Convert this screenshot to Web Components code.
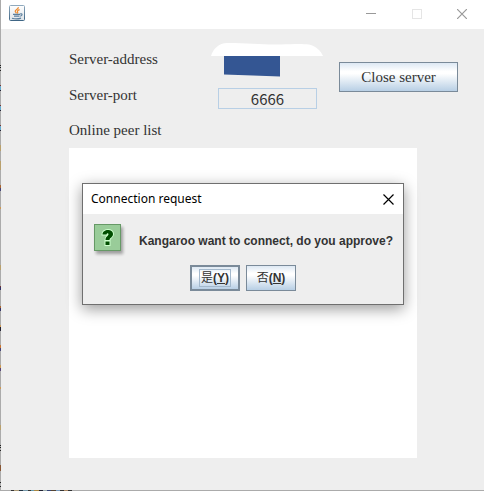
<!DOCTYPE html>
<html lang="en">
<head>
<meta charset="utf-8">
<title>Server</title>
<style>
html,body{height:100%}
body{margin:0;background:#ababab;overflow:hidden}
</style>
</head>
<body>
<server-app></server-app>
<script>
function define(name, html){
  customElements.define(name, class extends HTMLElement{
    constructor(){
      super();
      const t=document.createElement('template');
      t.innerHTML=html;
      this.attachShadow({mode:'open'}).append(t.content.cloneNode(true));
    }
  });
}

define('java-icon', `
<style>:host{display:block;width:16px;height:16px}svg{display:block}</style>
<svg width="16" height="16" viewBox="0 0 16 16" aria-hidden="true">
<defs><linearGradient id="g" x1="0" y1="0" x2="0" y2="1"><stop offset="0" stop-color="#8fa9bd"/><stop offset="1" stop-color="#3f6685"/></linearGradient>
<linearGradient id="h" x1="0" y1="0" x2="0" y2="1"><stop offset="0" stop-color="#fff"/><stop offset="1" stop-color="#dde3e8"/></linearGradient></defs>
<rect x=".5" y=".5" width="15" height="15" rx="1" fill="url(#h)" stroke="url(#g)"/>
<path d="M9.3 2.2C9.8 4 6 4.7 6.2 6.3c.1.8 1 1.3 1.2 2M10.6 4.6C8.8 5.2 8 6 8.6 6.8c.4.7.2 1.2-.4 1.7" fill="none" stroke="#ee8a2c" stroke-width="1.2"/>
<path d="M4 9.3h7M5 11.2h5.5M3 13.2c2.5.8 6.500.8 9-.1M11 9c2.600-1 2.800 1.400.2 2.200" fill="none" stroke="#5b7f9d" stroke-width="1.200"/>
</svg>`);

define('window-button', `
<style>
:host{display:block}
button{display:grid;place-items:center;width:100%;height:100%;margin:0;padding:0;border:0;background:none;color:inherit}
</style><button type="button"><slot></slot></button>`);

define('metal-button', `
<style>
:host{display:block}
button{display:flex;align-items:center;justify-content:center;width:100%;height:100%;margin:0;padding:0;
border:1px solid #7a8a99;color:#333;font:inherit;
background:linear-gradient(#dde8f3 0,#fff 30%,#fff 38%,#b8cfe5 100%)}
:host([default]) button{border-width:2px}
span{border:1px solid transparent;padding:0 1px;line-height:16px}
:host([default]) span{border-color:#a3b8cc}
</style><button type="button"><span><slot></slot></span></button>`);

define('title-bar', `
<style>
:host{display:flex;align-items:flex-start;height:29px;background:#fff;color:#999}
java-icon{margin:5px 0 0 8px}
.space{flex:1}
window-button{width:45px;height:27px}
svg{display:block}
</style>
<java-icon></java-icon><div class="space"></div>
<window-button><svg width="11" height="11" role="img" aria-label="Minimize"><path d="M0 5.500h10" stroke="currentColor"/></svg></window-button>
<window-button><svg width="10" height="10" role="img" aria-label="Maximize"><rect x=".5" y=".5" width="9" height="9" fill="none" stroke="#e5e5e5"/></svg></window-button>
<window-button><svg width="10" height="10" role="img" aria-label="Close"><path d="M0 0l10 10M10 0L0 10" stroke="currentColor" stroke-width="1.200"/></svg></window-button>`);

define('address-cover', `
<style>:host{display:block}svg{display:block}</style>
<svg width="112" height="34" viewBox="0 0 112 34" role="img" aria-label="Hidden address">
<path d="M0 13C2 6 8 0 16 0C38 0 52 2 70 1.500C82 1 91 .5 98 1.500C105 3 110 8 112 13Z" fill="#fff"/>
<path d="M13 13H69V33.500L42 32.500L13 31.500Z" fill="#345693"/>
</svg>`);

define('server-form', `
<style>
:host{display:grid;grid-template-columns:142px 1fr 16px 119px;grid-template-rows:37px 36px;align-items:center;
padding:11px 26px 0 68px;font:15px/20px "Liberation Serif",serif;color:#333}
input{box-sizing:border-box;width:calc(100% - 13px);height:21px;margin:7px 6px 0 7px;padding:0;border:1px solid #b8cfe5;
background:#eee;color:#333;text-align:center;font:15px/19px "Noto Sans CJK SC","Noto Sans",sans-serif}
address-cover{align-self:end}
label{grid-area:2/1}
input{grid-area:2/2}
metal-button{grid-area:1/4/3/5;height:30px}
</style>
<div>Server-address</div><address-cover></address-cover>
<label for="port">Server-port</label><input id="port" value="6666" readonly>
<metal-button>Close server</metal-button>`);

define('peer-list', `
<style>
:host{display:flex;flex-direction:column;padding:0 67px 32px 68px;font:15px/35px "Liberation Serif",serif;color:#333}
ul{flex:1;margin:0;padding:0;background:#fff;list-style:none}
</style>
<div id="t">Online peer list</div><ul aria-labelledby="t"></ul>`);

define('question-icon', `
<style>:host{display:block;width:28px;height:28px}
div{box-sizing:border-box;width:27px;height:27px;border:1px solid #669966;background:#9c9;box-shadow:2px 3px 3px #0005}svg{display:block}</style>
<div><svg width="25" height="25" viewBox="0 0 25 25" role="img" aria-label="Question">
<path d="M7.500 9.500C7.500 3.500 18 3.500 18 9C18 12.500 14.500 12.500 14.500 15H10.500C10.500 11.500 13.500 11 13.500 9.300C13.500 8 11.800 8 11.500 9.500ZM10.500 16.500H14.500V20H10.500Z" fill="#004d00" stroke="#ccffcc" stroke-width="2" paint-order="stroke"/></svg></div>`);

define('request-dialog', `
<style>
:host{display:block;box-sizing:border-box;border:1px solid #6f6f6f;background:#eee;color:#333;
box-shadow:0 4px 14px #0006;font:bold 12px/16px "Liberation Sans","Noto Sans CJK SC",sans-serif}
header{display:flex;align-items:center;height:30px;padding-left:8px;background:#fff;color:#000;font:12px/16px "Noto Sans","Noto Sans CJK SC",sans-serif}
header span{flex:1}
window-button{width:30px;height:30px}
svg{display:block}
.message{display:flex;align-items:center;gap:18px;padding:10px 10px 0 11px;white-space:nowrap}
.message p{margin:5px 0 0}
.actions{display:flex;justify-content:center;gap:6px;padding:13px 0 13px}
.actions span{font-weight:normal}
metal-button{width:50px;height:26px}
</style>
<header><span>Connection request</span><window-button><svg width="11" height="11" role="img" aria-label="Close"><path d="M.5.5l10 10M10.500.5l-10 10" stroke="#000" stroke-width="1.200"/></svg></window-button></header>
<div class="message"><question-icon></question-icon><p>Kangaroo want to connect, do you approve?</p></div>
<div class="actions"><metal-button default><span>是</span>(<u>Y</u>)</metal-button><metal-button><span>否</span>(<u>N</u>)</metal-button></div>`);

define('server-app', `
<style>
:host{display:flex;flex-direction:column;box-sizing:border-box;height:100vh;position:relative;padding:0 0 1px 1px;
background:
linear-gradient(90deg,transparent 11px,#333 11px 14px,#a97 14px 19px,#234 19px 23px,#79a 23px 28px,#333 28px 31px,#69a 31px 34px,#a84 34px 39px,#223 39px 43px,#9aa 43px 47px,#347 47px 51px,#543 51px 56px,#79b 56px 60px,#333 60px 64px,#a86 64px 68px,#333 68px 72px,transparent 72px) 0 100%/100% 1px no-repeat,
linear-gradient(transparent 65px,#222 65px 66px,transparent 66px 67px,#222 67px 68px,transparent 68px 70px,#222 70px 71px,transparent 71px 85px,#733 85px 86px,#6ac 86px 90px,#223 90px 91px,transparent 91px 105px,#733 105px 106px,#6ac 106px 110px,#223 110px 111px,transparent 111px 125px,#733 125px 126px,#6ac 126px 130px,#223 130px 131px,transparent 131px 145px,#b9a06c 145px 151px,transparent 151px 161px,#b9a06c 161px 170px,transparent 170px 185px,#a63 185px 188px,#447 188px 191px,transparent 191px 207px,#c95 207px 209px,transparent 209px 265px,#b9a06c 265px 270px,transparent 270px 286px,#733 286px 287px,#336 287px 290px,transparent 290px 306px,#a63 306px 308px,#336 308px 311px,transparent 311px 325px,#c95 325px 327px,#223 327px 331px,transparent 331px 345px,#c73 345px 348px,#447 348px 351px,transparent 351px 365px,#c95 365px 368px,#547 368px 371px,transparent 371px 387px,#c95 387px 389px,transparent 389px 425px,#b9a06c 425px 430px,transparent 430px 445px,#222 445px 446px,transparent 446px 447px,#222 447px 448px,transparent 448px 450px,#222 450px 451px,transparent 451px 465px,#853 465px 471px,transparent 471px 482px,#222 482px 483px,transparent 483px 486px,#222 486px 487px,transparent 487px) 0 0/1px 100% no-repeat,#ababab}
main{flex:1;display:flex;flex-direction:column;background:#eee}
peer-list{flex:1}
request-dialog{position:absolute;top:183px;left:82px;width:322px}
</style>
<title-bar></title-bar>
<main><server-form></server-form><peer-list></peer-list></main>
<request-dialog role="dialog" aria-label="Connection request"></request-dialog>`);
</script>
</body>
</html>
